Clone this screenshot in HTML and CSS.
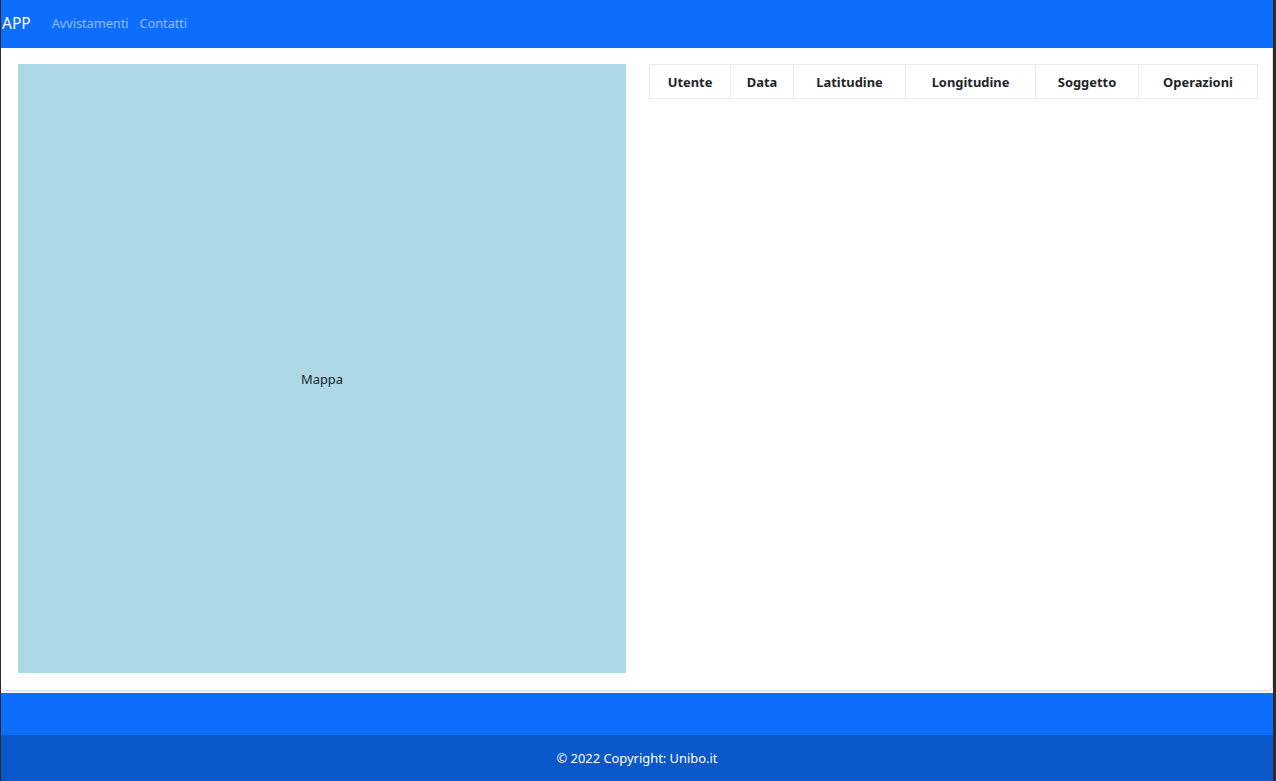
FILE: index.html
```html
<!DOCTYPE html>
<html lang="it">
<head>
<meta charset="utf-8">
<title>APP</title>
<link rel="stylesheet" href="styles.css">
</head>
<body>
<nav class="navbar">
  <a class="brand" href="#">APP</a>
  <ul class="nav-links">
    <li><a href="#">Avvistamenti</a></li>
    <li><a href="#">Contatti</a></li>
  </ul>
</nav>
<main class="main">
  <div class="map"><span>Mappa</span></div>
  <div class="table-wrap">
    <table class="table">
      <colgroup>
        <col class="c1"><col class="c2"><col class="c3"><col class="c4"><col class="c5"><col class="c6">
      </colgroup>
      <thead>
        <tr>
          <th>Utente</th>
          <th>Data</th>
          <th>Latitudine</th>
          <th>Longitudine</th>
          <th>Soggetto</th>
          <th>Operazioni</th>
        </tr>
      </thead>
    </table>
  </div>
</main>
<footer class="footer">
  <div class="footer-top"></div>
  <div class="copyright">© 2022 Copyright: Unibo.it</div>
</footer>
</body>
</html>
```

FILE: styles.css
```css
html, body {
  margin: 0;
  padding: 0;
}
body {
  width: 1276px;
  height: 781px;
  box-sizing: border-box;
  border-left: 1px solid #2b2b2b;
  border-right: 3px solid #2b2b2b;
  font-family: "Noto Sans", "Open Sans", sans-serif;
  font-size: 12.9px;
  color: #212529;
  background: #ffffff;
  overflow: hidden;
  display: flex;
  flex-direction: column;
}
.navbar {
  height: 48px;
  box-sizing: border-box;
  padding: 0 0 2px 1px;
  background: #0d6efd;
  display: flex;
  align-items: center;
}
.brand {
  color: #ffffff;
  text-decoration: none;
  font-size: 15.5px;
  margin-right: 21px;
}
.nav-links {
  list-style: none;
  margin: 0;
  padding: 0;
  display: flex;
  gap: 11px;
}
.nav-links a {
  color: rgba(255, 255, 255, 0.55);
  text-decoration: none;
  letter-spacing: -0.1px;
}
.main {
  height: 643px;
  box-sizing: border-box;
  padding: 16px 16px 16px 17px;
  display: flex;
  gap: 23px;
  border-right: 1px solid #e2e2e2;
  border-bottom: 1px solid #dcdcdc;
  border-radius: 0 0 5px 5px;
  box-shadow: 0 1px 2px rgba(0, 0, 0, 0.08);
  margin-bottom: 2px;
}
.map {
  width: 608px;
  height: 609px;
  flex: none;
  box-sizing: border-box;
  padding-top: 21px;
  background: #add8e6;
  display: flex;
  align-items: center;
  justify-content: center;
}
.table-wrap {
  width: 608px;
  flex: none;
}
.table {
  width: 608px;
  border-collapse: collapse;
  table-layout: fixed;
}
.c1 { width: 81px; }
.c2 { width: 63px; }
.c3 { width: 112px; }
.c4 { width: 130px; }
.c5 { width: 103px; }
.c6 { width: 119px; }
.table th {
  height: 34px;
  box-sizing: border-box;
  padding: 0;
  border: 1px solid #e9ecef;
  font-weight: 700;
  text-align: center;
  vertical-align: middle;
  color: #212529;
}
.footer {
  flex: 1;
  background: #0d6efd;
  display: flex;
  flex-direction: column;
}
.footer-top {
  height: 42px;
}
.copyright {
  flex: 1;
  background: rgba(0, 0, 0, 0.2);
  color: #ffffff;
  display: flex;
  align-items: center;
  justify-content: center;
}
```
